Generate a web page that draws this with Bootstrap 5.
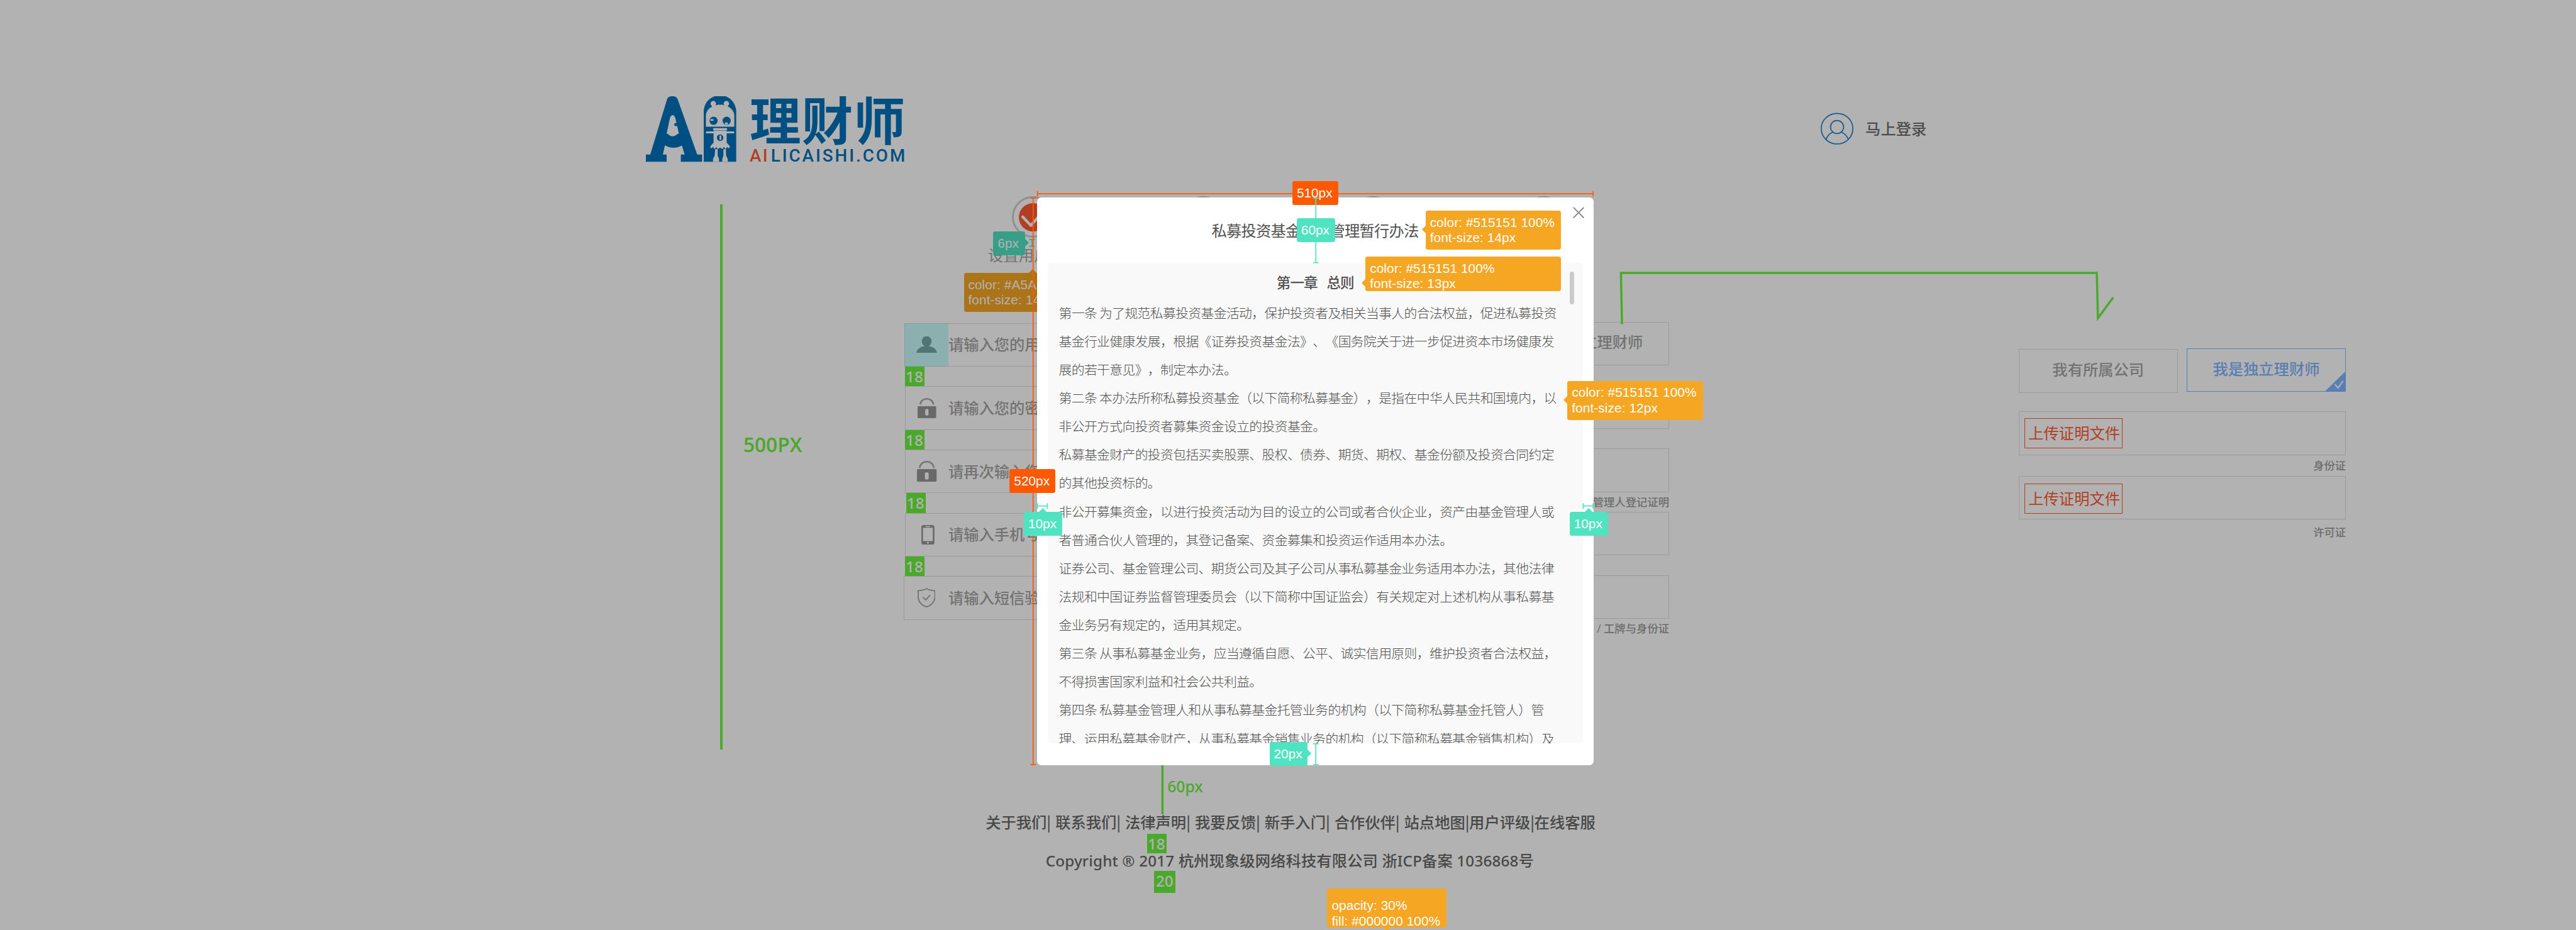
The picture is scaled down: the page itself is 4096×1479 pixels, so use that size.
<!DOCTYPE html>
<html lang="zh-CN">
<head>
<meta charset="utf-8">
<meta name="viewport" content="width=device-width, initial-scale=1">
<title>AI理财师 - 注册</title>
<link rel="stylesheet" href="https://cdn.jsdelivr.net/npm/bootstrap@5.3.0/dist/css/bootstrap.min.css">
<style>
/* 1rem = 10 design units */
html { font-size: 8.678px; }
body { margin: 0; overflow: hidden; background: #fff; font-family: "Noto Sans", "Noto Sans CJK SC", sans-serif; font-size: 2.8rem; line-height: 1; text-spacing-trim: space-all; }
.canvas { width: 4096px; height: 1479px; overflow: hidden; white-space: nowrap; }
.page { height: 100%; color: #a5a5a5; font-family: "Open Sans", "Noto Sans CJK SC", sans-serif; }
.topbar { padding: 17.6rem 0 0 118.4rem; height: 29.6rem; }
.topbar .logo { width: 47.2rem; height: 12rem; overflow: visible; }
.login { margin-left: 168rem; gap: 2.2rem; color: #6e6e6e; font-weight: 500; }
.login svg { width: 6rem; height: 5.9rem; }
.stage { height: 119.6rem; }
.vrule { width: .4rem; height: 100rem; margin: 7.8rem 0 0 132rem; background: #6bf13d; }
.vrule-label { width: 29.3rem; margin: 49.9rem 0 0 3.8rem; color: #6bf13d; font-size: 3.65rem; line-height: 4rem; font-weight: 600; }
.signup { width: 140rem; margin: 6.4rem 0 0 .35rem; }
.steps { height: 23.2rem; padding-left: 15.2rem; }
.step { width: 31.2rem; }
.step-dot { width: 7.6rem; height: 7.6rem; border: .35rem solid #cdcdcd; border-radius: 50%; margin-left: 4.4rem; padding: .85rem; }
.step-dot svg { width: 100%; height: 100%; display: block; }
.step-name { margin-top: 1.8rem; }
.fields { width: 60rem; }
.field-box { height: 8rem; border: .2rem solid #dfdfdf; font-weight: 500; }
.field-ico { width: 7.8rem; height: 100%; }
.field-box.active { border-color: #dfdfdf; }
.field-box.active .field-ico { width: 8rem; height: 8rem; margin-left: -.2rem; background: #c9fbfb; border: .2rem solid #b7e2e2; border-right: 0; }
.gap-mark { width: 3.6rem; height: 3.6rem; background: #6bf13d; color: #fff; font-family: "Noto Sans", sans-serif; font-weight: 500; line-height: 3.7rem; padding-left: .1rem; font-size: 2.8rem; }
.wide { margin-left: -.2rem; }
.wide .field-ico { width: 8rem; }
.certs { margin-left: 20rem; width: 60rem; margin-top: -.2rem; }
.choice { width: 29.2rem; height: 8rem; border: .2rem solid #dfdfdf; font-weight: 500; padding-bottom: .5rem; }
.choice.on { border-color: #82b5ff; color: #82b5ff; }
.choice.on svg { right: 0; bottom: 0; width: 3.7rem; height: 3.6rem; }
.hint { height: 3.6rem; font-size: 2rem; font-weight: 500; color: #9d9d9d; line-height: 3.5rem; }
.variant { width: 60rem; margin: 34.2rem 0 0 64rem; }
.upload { width: 18rem; height: 5.6rem; border: .2rem solid #ff5b33; color: #ff5b33; font-weight: 400; margin-left: 1rem; padding-left: .2rem; }
.foot { color: #686868; font-weight: 500; }
.foot-links { padding-left: 180.6rem; height: 2.9rem; font-family: "Noto Sans CJK SC", sans-serif; }
.foot-links a { color: inherit; text-decoration: none; width: 12.78rem; }
.foot-links a.tight { width: 11.93rem; }
.foot-copy { margin: 4.2rem 0 0 191.6rem; line-height: 3rem; font-family: "Noto Sans", "Noto Sans CJK SC", sans-serif; letter-spacing: .015rem; }
.over { position: absolute; }
.mask { inset: 0; background: rgba(0,0,0,.3); }
.modal-panel { left: 190rem; top: 36.2rem; width: 102rem; height: 104rem; background: #fff; border-radius: .8rem; color: #515151; font-family: "Noto Sans CJK SC", sans-serif; padding: 0 2rem 4rem; }
.modal-panel h1 { height: 12rem; line-height: 12rem; margin: 0; font-size: 2.8rem; letter-spacing: -.09rem; font-weight: 400; padding-left: 30rem; }
.modal-panel .x-close { right: 1.7rem; top: 1.7rem; width: 2.1rem; height: 2.1rem; }
.rules { height: 88rem; background: #f9f9f9; border-radius: .8rem; overflow: hidden; padding: 0 2rem; font-size: 2.4rem; letter-spacing: -.072rem; font-weight: 300; }
.rules h2 { font-size: 2.6rem; letter-spacing: -.1rem; word-spacing: .36rem; font-weight: 500; line-height: 7rem; height: 6.5rem; margin: 0 0 0 39.9rem; white-space: pre; }
.rules p { margin: 0; line-height: 5.2rem; }
.rules .thumb { right: 3.6rem; top: 13.6rem; width: .8rem; height: 6rem; border-radius: .4rem; background: #cbcbcb; }
/* annotation labels */
.tip { position: absolute; height: 4.4rem; border-radius: .4rem; color: #fff; font: 2.4rem/4.4rem "Liberation Sans", sans-serif; padding-left: .8rem; }
.tip.teal { background: #50e3c2; } .tip.red { background: #ff5900; }
.tip.amber { background: #f5a623; height: 7.2rem; line-height: 2.8rem; padding-top: .78rem; letter-spacing: .01rem; }
.tip::after { position: absolute; content: ""; border: .8rem solid transparent; }
.tip.al::after { right: 100%; top: 2.8rem; border-right-color: #f5a623; }
.tip.ac::after { top: 4.2rem; }
.tip.ar::after { left: 100%; top: 1.4rem; border-left-color: #50e3c2; }
.tip.au::after { bottom: 100%; left: 2.75rem; border-bottom-color: #50e3c2; }
.tip.amber.au::after { left: 11.9rem; border-bottom-color: #f5a623; }
.tip.amber.ad::after { top: 100%; left: 10.2rem; border-top-color: #f5a623; }
.lines { left: 0; top: 0; width: 100%; height: 100%; }
</style>
<script src="https://cdn.jsdelivr.net/npm/bootstrap@5.3.0/dist/js/bootstrap.bundle.min.js"></script>
</head>
<body>
<div class="canvas position-relative">
  <div class="page d-flex flex-column">
    <header class="topbar d-flex align-items-center">
      <svg class="logo" viewBox="0 0 472 120">
        <g fill="#0071ba">
          <path fill-rule="evenodd" d="M39 5Q41 0 48.500 0Q56 0 58 5L94 107H103V120H64V107H71L66 90.500Q49 99 35 90L31 107H38V120H0V107H8ZM49 34.500Q46 34.500 44 40L38 69Q41 68 42 71Q49 76 56 71Q58 68 60.500 69L54 40Q52 34.500 49 34.500Z"/>
          <circle cx="55" cy="52" r="3"/>
          <path d="M106 120V26Q108 7 126 0H146Q163 7 165.500 26V120Z"/>
        </g>
        <g fill="#fff">
          <circle cx="123.500" cy="13.500" r="5"/><circle cx="147.500" cy="13.500" r="5"/>
          <path d="M121 16H126V22H121ZM145 16H150V22H145Z"/>
          <path d="M110 56V36C110 24 122 15.500 136 15.500S162 24 162 36V56Z"/>
          <rect x="123" y="58.500" width="26" height="4" rx="2"/>
          <rect x="110" y="64.500" width="52" height="3.600" rx="1.500"/>
          <path d="M124 63H148V85L154 92L152 96L149 93L146 97L143 93L140 97L136 94L132 97L129 93L126 97L123 93L119 96L118 92L124 85Z"/>
          <path d="M127 97H131.500V109L134 115V120H123V115L126 109ZM142 97H146.500L147 109L150 115V120H140V115L142 109Z"/>
        </g>
        <g fill="#0071ba">
          <circle cx="124" cy="45" r="7.500"/><circle cx="148" cy="45" r="7.500"/><circle cx="136" cy="76" r="6"/>
          <text x="190" y="80.500" font-family="Noto Sans CJK SC" font-weight="700" font-size="94" textLength="285">理财师</text>
          <text x="229" y="120" font-family="Roboto, sans-serif" font-weight="500" font-size="32" textLength="246">LICAISHI.COM</text>
          <text x="190" y="120" font-family="Roboto, sans-serif" font-weight="500" font-size="32" textLength="33" fill="#ff5b33">AI</text>
        </g>
        <path d="M118 42H124V45H118ZM145 48H150V52H145ZM135 72H138V80H135Z" fill="#fff"/>
      </svg>
      <div class="login d-flex align-items-center">
        <svg viewBox="0 0 60 58" fill="none" stroke="#2684cc" stroke-width="2"><ellipse cx="30" cy="29" rx="29" ry="28"/><ellipse cx="30" cy="26" rx="12" ry="12"/><path d="M10 49Q13 39 23 35M37 35Q47 39 51 49"/></svg>
        <span>马上登录</span>
      </div>
    </header>

    <main class="stage d-flex align-items-start">
      <div class="vrule flex-shrink-0"></div>
      <div class="vrule-label flex-shrink-0">500PX</div>
      <section class="signup flex-shrink-0">
        <div class="steps d-flex">
          <div class="step"><div class="step-dot"><svg viewBox="0 0 52 52"><circle cx="26" cy="26" r="26" fill="#ff5b33"/><path d="M7 25L22 41L44 16" fill="none" stroke="#fff" stroke-width="5" stroke-linecap="round" stroke-linejoin="round"/></svg></div><div class="step-name">设置用户名</div></div>
          <div class="step"><div class="step-dot"></div></div>
          <div class="step"><div class="step-dot"></div></div>
          <div class="step"><div class="step-dot"></div></div>
        </div>
        <div class="d-flex">
          <div class="fields">
            <div class="field-box active d-flex align-items-center"><span class="field-ico d-flex align-items-center justify-content-center"><svg style="width:3.8rem;height:3rem" viewBox="0 0 38 30" fill="#75a7a7"><ellipse cx="19" cy="9" rx="9" ry="9.500"/><path d="M15 15H23V18Q36 20 38 30H0Q2 20 15 18Z"/></svg></span>请输入您的用户名</div>
            <div class="gap-mark">18</div>
            <div class="field-box d-flex align-items-center"><span class="field-ico d-flex align-items-center justify-content-center"><svg style="width:3.4rem;height:3.7rem" viewBox="0 0 34 37"><path d="M5 12C6 -2 28 -2 29 12" fill="none" stroke="#a8a8a8" stroke-width="3"/><rect y="15" width="34" height="22" rx="2" fill="#979797"/><rect x="14" y="20" width="6" height="12" rx="3" fill="#fff"/></svg></span>请输入您的密码</div>
            <div class="gap-mark">18</div>
            <div class="field-box d-flex align-items-center"><span class="field-ico d-flex align-items-center justify-content-center"><svg style="width:3.6rem;height:3.8rem" viewBox="0 0 36 38"><path d="M5 13C6 -2.500 30 -2.500 31 13" fill="none" stroke="#a8a8a8" stroke-width="3"/><rect y="15" width="36" height="23" rx="2" fill="#979797"/><rect x="14.500" y="21" width="7" height="13" rx="3" fill="#fff"/></svg></span>请再次输入您的密码</div>
            <div class="gap-mark" style="margin-left:.2rem">18</div>
            <div class="field-box d-flex align-items-center"><span class="field-ico d-flex align-items-center justify-content-center ps-1"><svg style="width:2.4rem;height:3.6rem" viewBox="0 0 24 36"><path fill-rule="evenodd" fill="#979797" d="M4 0H20Q24 0 24 4V32Q24 36 20 36H4Q0 36 0 32V4Q0 0 4 0ZM3 5V29.500H21V5ZM8 2V3.500H16V2ZM10.500 31V34H13.500V31Z"/></svg></span>请输入手机号</div>
            <div class="gap-mark">18</div>
            <div class="field-box wide d-flex align-items-center"><span class="field-ico d-flex align-items-center justify-content-center"><svg style="width:3.3rem;height:3.6rem" viewBox="0 0 33 36" fill="none" stroke="#a5a5a5" stroke-width="2.200"><path d="M16.500 1.200Q23 5 31.800 5V17Q31 30 16.500 34.800Q2 30 1.200 17V5Q10 5 16.500 1.200Z"/><path d="M10 17L15 22L23 13"/></svg></span>请输入短信验证码</div>
          </div>
          <div class="certs">
            <div class="d-flex justify-content-between">
              <div class="choice d-flex align-items-center justify-content-center">我有所属公司</div>
              <div class="choice d-flex align-items-center justify-content-center">我是独立理财师</div>
            </div>
            <div class="hint"></div>
            <div class="field-box"></div>
            <div class="hint"></div>
            <div class="field-box"></div>
            <div class="hint text-end">私募基金管理人登记证明</div>
            <div class="field-box"></div>
            <div class="hint"></div>
            <div class="field-box"></div>
            <div class="hint text-end">名片 / 工牌与身份证</div>
          </div>
        </div>
      </section>
      <section class="variant flex-shrink-0">
        <div class="d-flex justify-content-between">
          <div class="choice d-flex align-items-center justify-content-center" style="margin-top:.2rem">我有所属公司</div>
          <div class="choice on position-relative d-flex align-items-center justify-content-center" style="padding-bottom:.2rem">我是独立理财师<svg class="over" viewBox="0 0 37 36"><path d="M37 0V36H0Z" fill="#82b5ff"/><path d="M18 23L24 30L33 17" fill="none" stroke="#fff" stroke-width="2.500"/></svg></div>
        </div>
        <div class="hint" style="height:3.4rem"></div>
        <div class="field-box d-flex align-items-center"><div class="upload d-flex align-items-center justify-content-center">上传证明文件</div></div>
        <div class="hint text-end" style="height:3.8rem;line-height:3.8rem">身份证</div>
        <div class="field-box d-flex align-items-center"><div class="upload d-flex align-items-center justify-content-center" style="margin-top:.4rem">上传证明文件</div></div>
        <div class="hint text-end" style="line-height:4.700rem">许可证</div>
      </section>
    </main>

    <footer class="foot">
      <nav class="foot-links d-flex"><a href="#">关于我们|</a><a href="#">联系我们|</a><a href="#">法律声明|</a><a href="#">我要反馈|</a><a href="#">新手入门|</a><a href="#">合作伙伴|</a><a href="#" class="tight">站点地图|</a><a href="#" class="tight">用户评级|</a><a href="#">在线客服</a></nav>
      <div class="foot-copy">Copyright ® 2017 杭州现象级网络科技有限公司 浙ICP备案 1036868号</div>
    </footer>
  </div>

  <!-- annotations drawn beneath the dimming mask -->
  <svg class="over lines" viewBox="0 0 4720 1704" fill="none" stroke="#6bf13d" stroke-width="4"><path d="M2972 594L2970 500H3842L3844 583L3872 545M2130 1400V1492"/></svg>
  <div class="over" style="left:213.9rem;top:142.500rem;color:#6bf13d;font:500 2.85rem/3.2rem 'Noto Sans'">60px</div>
  <div class="over gap-mark" style="left:210.2rem;top:152.8rem">18</div>
  <div class="over gap-mark" style="left:211.4rem;top:159.6rem;width:4rem;height:4rem;padding-left:.4rem">20</div>
  <div class="tip teal ar" style="left:182rem;top:42.4rem;width:5.8rem">6px</div>
  <div class="tip amber au" style="left:176.6rem;top:50rem;width:24.8rem">color: #A5A5A5 100%<br>font-size: 14px</div>
  <svg class="over lines" viewBox="0 0 4720 1704" fill="none" stroke="#50e3c2" stroke-width="2"><path d="M1886 439H1896M1891 439V451M1886 451H1896"/></svg>

  <div class="over mask"></div>

  <div class="over modal-panel">
    <svg class="over x-close" viewBox="0 0 21 21" stroke="#858585" stroke-width="2.200"><path d="M1 1L20 20M20 1L1 20"/></svg>
    <h1>私募投资基金监督管理暂行办法</h1>
    <div class="rules">
      <h2>第一章  总则</h2>
      <p>第一条 为了规范私募投资基金活动，保护投资者及相关当事人的合法权益，促进私募投资</p>
      <p>基金行业健康发展，根据《证券投资基金法》、《国务院关于进一步促进资本市场健康发</p>
      <p>展的若干意见》，制定本办法。</p>
      <p>第二条 本办法所称私募投资基金（以下简称私募基金），是指在中华人民共和国境内，以</p>
      <p>非公开方式向投资者募集资金设立的投资基金。</p>
      <p>私募基金财产的投资包括买卖股票、股权、债券、期货、期权、基金份额及投资合同约定</p>
      <p>的其他投资标的。</p>
      <p>非公开募集资金，以进行投资活动为目的设立的公司或者合伙企业，资产由基金管理人或</p>
      <p>者普通合伙人管理的，其登记备案、资金募集和投资运作适用本办法。</p>
      <p>证券公司、基金管理公司、期货公司及其子公司从事私募基金业务适用本办法，其他法律</p>
      <p>法规和中国证券监督管理委员会（以下简称中国证监会）有关规定对上述机构从事私募基</p>
      <p>金业务另有规定的，适用其规定。</p>
      <p>第三条 从事私募基金业务，应当遵循自愿、公平、诚实信用原则，维护投资者合法权益，</p>
      <p>不得损害国家利益和社会公共利益。</p>
      <p>第四条 私募基金管理人和从事私募基金托管业务的机构（以下简称私募基金托管人）管</p>
      <p>理、运用私募基金财产，从事私募基金销售业务的机构（以下简称私募基金销售机构）及</p>
      <div class="over thumb"></div>
    </div>
  </div>

  <!-- annotations above the dialog -->
  <svg class="over lines" viewBox="0 0 4720 1704" fill="none" stroke="#ff5900" stroke-width="2"><path d="M1901 350V360M1901 355H2919M2919 350V360M1888 363H1898M1893 363V1401M1888 1401H1898"/></svg>
  <div class="tip red" style="left:236.8rem;top:33.2rem;width:8.4rem">510px</div>
  <div class="tip red" style="left:185rem;top:86rem;width:8.4rem">520px</div>
  <svg class="over lines" viewBox="0 0 4720 1704" fill="none" stroke="#50e3c2" stroke-width="2"><path d="M2406 363H2416M2411 363V481M2406 481H2416M2406 1363H2416M2411 1363V1401M2406 1401H2416M1901 922V932M1901 927H1919M1919 922V932M2901 922V932M2901 927H2919M2919 922V932"/></svg>
  <div class="tip teal" style="left:237.6rem;top:40rem;width:7rem">60px</div>
  <div class="tip teal au" style="left:187.6rem;top:93.8rem;width:7rem">10px</div>
  <div class="tip teal au" style="left:287.6rem;top:93.8rem;width:7rem">10px</div>
  <div class="tip teal ar" style="left:232.6rem;top:136rem;width:7rem">20px</div>
  <div class="tip amber al" style="left:261.2rem;top:38.6rem;width:24.8rem">color: #515151 100%<br>font-size: 14px</div>
  <div class="tip amber al ac" style="left:250.2rem;top:47rem;width:35.8rem;height:6.4rem">color: #515151 100%<br>font-size: 13px</div>
  <div class="tip amber al" style="left:287.2rem;top:69.8rem;width:24.8rem">color: #515151 100%<br>font-size: 12px</div>
  <div class="tip amber ad" style="left:243.2rem;top:162.8rem;width:21.8rem;padding-top:1.8rem">opacity: 30%<br>fill: #000000 100%</div>
</div>
</body>
</html>
